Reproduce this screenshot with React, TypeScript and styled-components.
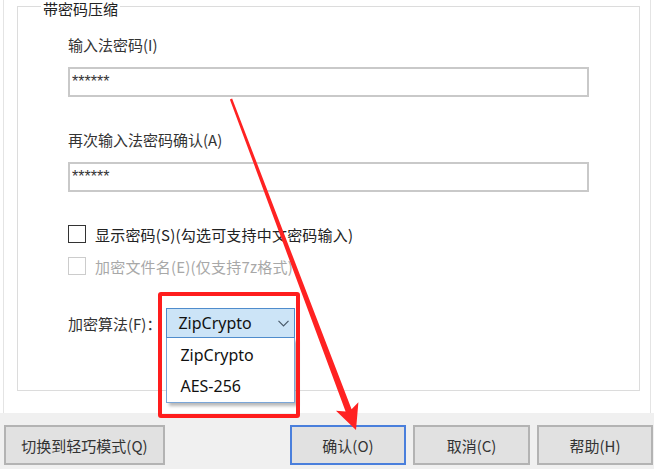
import React from "react";
import styled, { createGlobalStyle } from "styled-components";

const Global = createGlobalStyle`
  html, body { margin: 0; padding: 0; background: #ffffff; }
  body {
    width: 654px;
    height: 469px;
    overflow: hidden;
    font-family: "Noto Sans CJK SC", "Noto Sans", sans-serif;
  }
  * { box-sizing: border-box; }
`;

const Page = styled.div`
  position: relative;
  width: 654px;
  height: 469px;
  display: flex;
  flex-direction: column;
  overflow: hidden;
  background: #ffffff;
`;

const Panel = styled.div`
  height: 413px;
  margin: 0 3px;
  border-left: 1px solid #e4e4e4;
  border-right: 1px solid #e4e4e4;
  padding: 0 10px 0 13px;
  background: #ffffff;
`;

const Group = styled.fieldset`
  margin: 0;
  height: 391px;
  border: 1px solid #dcdcdc;
  padding: 23px 50px 0 50px;
  display: flex;
  flex-direction: column;
  min-width: 0;
`;

const Legend = styled.legend`
  margin-left: -27px;
  padding: 6px 2px 0 2px;
  line-height: 6px;
  font-size: 15px;
  color: #222222;
`;

const FieldLabel = styled.div<{ $top?: number }>`
  margin-top: ${(p) => p.$top ?? 0}px;
  font-size: 15px;
  line-height: 20px;
  color: #333333;
`;

const TextBox = styled.input`
  margin-top: 12px;
  width: 100%;
  height: 30px;
  border: 2px solid #c9c9c9;
  padding: 0 0 0 2px;
  font-family: "Liberation Sans", Arial, sans-serif;
  font-size: 16px;
  color: #333333;
  background: #ffffff;
  outline: none;
`;

const CheckRow = styled.label<{ $top: number; $disabled?: boolean }>`
  margin-top: ${(p) => p.$top}px;
  height: 24px;
  display: flex;
  align-items: center;
  gap: 9px;
  font-size: 15px;
  letter-spacing: 0.2px;
  color: ${(p) => (p.$disabled ? "#a8a8a8" : "#222222")};
`;

const CheckBox = styled.span<{ $disabled?: boolean }>`
  width: 18px;
  height: 18px;
  flex: none;
  background: #ffffff;
  border: 1px solid ${(p) => (p.$disabled ? "#cccccc" : "#333333")};
`;

const AlgoRow = styled.div`
  margin-top: 30px;
  height: 30px;
  display: flex;
  align-items: center;
  gap: 5px;
`;

const AlgoLabel = styled.span`
  font-size: 15px;
  color: #333333;
`;

const SelectWrap = styled.div`
  position: relative;
  width: 129px;
  height: 30px;
`;

const SelectBox = styled.div`
  height: 30px;
  border: 1px solid #4f8ccc;
  background: #cce4f7;
  display: flex;
  align-items: center;
  justify-content: space-between;
  padding: 0 5px 0 11px;
  font-family: "Noto Sans", sans-serif;
  font-size: 16px;
  color: #111111;
`;

const DropList = styled.div`
  position: absolute;
  left: 0;
  top: 30px;
  width: 129px;
  padding: 2px 0 0 0;
  background: #ffffff;
  border: 1px solid #7aa6d8;
  border-top: none;
  box-shadow: 3px 3px 3px rgba(0, 0, 0, 0.28);
  z-index: 2;
`;

const DropItem = styled.div`
  height: 31px;
  line-height: 31px;
  padding-left: 13px;
  font-family: "Noto Sans", sans-serif;
  font-size: 16px;
  color: #111111;
`;

const Footer = styled.div`
  flex: 1;
  background: #f0f0f0;
  display: flex;
  align-items: flex-start;
  padding: 12px 1px 0 4px;
`;

const RightButtons = styled.div`
  margin-left: auto;
  display: flex;
  gap: 7px;
`;

const Button = styled.button<{ $w: number; $primary?: boolean }>`
  width: ${(p) => p.$w}px;
  height: 40px;
  margin: 0;
  padding: 0;
  background: #e1e1e1;
  border: 2px solid ${(p) => (p.$primary ? "#4a7fdc" : "#b3b3b3")};
  font-family: "Noto Sans CJK SC", "Noto Sans", sans-serif;
  font-size: 15px;
  color: #333333;
`;

const RedBox = styled.div`
  position: absolute;
  left: 158px;
  top: 292px;
  width: 142px;
  height: 126px;
  border: 4px solid #ff1d1d;
  border-radius: 3px;
  pointer-events: none;
  z-index: 3;
`;

const Overlay = styled.svg`
  position: absolute;
  left: 0;
  top: 0;
  pointer-events: none;
  z-index: 4;
`;

function arrowPoints() {
  const S = [231, 99];
  const T = [356, 430];
  const dx = T[0] - S[0];
  const dy = T[1] - S[1];
  const len = Math.hypot(dx, dy);
  const d = [dx / len, dy / len];
  const n = [d[1], -d[0]];
  const B = [T[0] - 25 * d[0], T[1] - 25 * d[1]];
  const B2 = [T[0] - 21 * d[0], T[1] - 21 * d[1]];
  const pt = (p: number[], k: number) => `${p[0] + k * n[0]},${p[1] + k * n[1]}`;
  return [
    pt(S, 1.2),
    pt(B2, 3.2),
    pt(B, 12),
    `${T[0]},${T[1]}`,
    pt(B, -12),
    pt(B2, -3.2),
    pt(S, -1.2),
  ].join(" ");
}

export default function App() {
  return (
    <Page>
      <Global />
      <Panel>
        <Group>
          <Legend>带密码压缩</Legend>
          <FieldLabel>输入法密码(I)</FieldLabel>
          <TextBox readOnly value="******" />
          <FieldLabel $top={33}>再次输入法密码确认(A)</FieldLabel>
          <TextBox readOnly value="******" />
          <CheckRow $top={30}>
            <CheckBox />
            显示密码(S)(勾选可支持中文密码输入)
          </CheckRow>
          <CheckRow $top={8} $disabled>
            <CheckBox $disabled />
            加密文件名(E)(仅支持7z格式)
          </CheckRow>
          <AlgoRow>
            <AlgoLabel>加密算法(F)：</AlgoLabel>
            <SelectWrap>
              <SelectBox>
                ZipCrypto
                <svg width="11" height="7" viewBox="0 0 11 7">
                  <path d="M0.5 0.8 L5.5 5.8 L10.5 0.8" fill="none" stroke="#4a5a6a" strokeWidth="1.2" />
                </svg>
              </SelectBox>
              <DropList>
                <DropItem>ZipCrypto</DropItem>
                <DropItem>AES-256</DropItem>
              </DropList>
            </SelectWrap>
          </AlgoRow>
        </Group>
      </Panel>
      <Footer>
        <Button $w={161}>切换到轻巧模式(Q)</Button>
        <RightButtons>
          <Button $w={116} $primary>确认(O)</Button>
          <Button $w={117}>取消(C)</Button>
          <Button $w={116}>帮助(H)</Button>
        </RightButtons>
      </Footer>
      <RedBox />
      <Overlay width="654" height="469" viewBox="0 0 654 469">
        <polygon points={arrowPoints()} fill="#ff2222" />
      </Overlay>
    </Page>
  );
}
